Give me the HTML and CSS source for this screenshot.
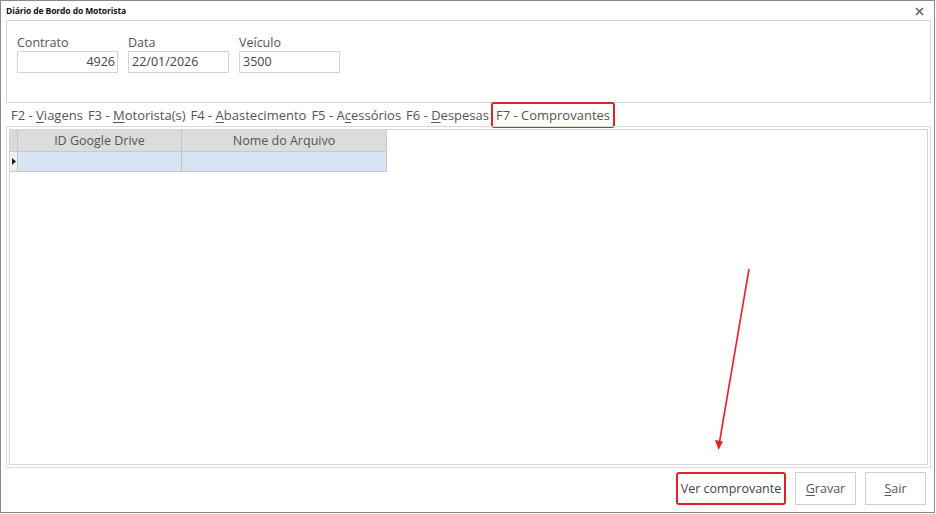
FILE: index.html
```html
<!DOCTYPE html>
<html>
<head>
<meta charset="utf-8">
<link rel="stylesheet" href="styles.css">
</head>
<body>
<div class="window">
  <div class="titlebar">
    <span class="title">Diário de Bordo do Motorista</span>
    <svg class="close" width="9" height="9" viewBox="0 0 9 9"><path d="M1 1L8 8M8 1L1 8" stroke="#666" stroke-width="1.7"/></svg>
  </div>
  <div class="header">
    <div class="field">
      <label>Contrato</label>
      <div class="input right">4926</div>
    </div>
    <div class="field">
      <label>Data</label>
      <div class="input">22/01/2026</div>
    </div>
    <div class="field">
      <label>Veículo</label>
      <div class="input">3500</div>
    </div>
  </div>
  <div class="tabs">
    <span class="tab">F2 - <u>V</u>iagens</span>
    <span class="tab">F3 - <u>M</u>otorista(s)</span>
    <span class="tab">F4 - <u>A</u>bastecimento</span>
    <span class="tab">F5 - A<u>c</u>essórios</span>
    <span class="tab">F6 - <u>D</u>espesas</span>
    <span class="tab active">F7 - Comprovantes</span>
  </div>
  <div class="panel">
    <div class="grid">
      <div class="row head">
        <div class="ind"></div>
        <div class="col c1">ID Google Drive</div>
        <div class="col c2">Nome do Arquivo</div>
      </div>
      <div class="row data">
        <div class="ind"><svg width="4" height="7" viewBox="0 0 4 7"><path d="M0 0L4 3.5L0 7Z" fill="#222"/></svg></div>
        <div class="col c1"></div>
        <div class="col c2"></div>
      </div>
    </div>
  </div>
  <div class="buttons">
    <div class="btn highlight">Ver comprovante</div>
    <div class="btn"><u>G</u>ravar</div>
    <div class="btn"><u>S</u>air</div>
  </div>
  <svg class="arrow" width="60" height="200" viewBox="0 0 60 200">
    <line x1="53" y1="15" x2="23.5" y2="188" stroke="#e8202e" stroke-width="1.6"/>
    <path d="M19 186L27 187.5L22.5 196Z" fill="#e8202e"/>
  </svg>
</div>
</body>
</html>
```
FILE: styles.css
```css
* { box-sizing: border-box; }
html, body { margin: 0; padding: 0; background: #fff; }
body {
  width: 936px; height: 514px;
  font-family: "Open Sans", "Noto Sans", sans-serif;
  color: #444;
}
.window {
  position: relative;
  width: 935px; height: 513px;
  border: 1px solid #8a8a8a;
  background: #fff;
  display: flex; flex-direction: column;
}
.titlebar {
  height: 19px;
  display: flex; align-items: center; justify-content: space-between;
  padding: 0 10px 0 5px;
}
.title { font-size: 8.5px; font-weight: 700; color: #111; letter-spacing: -0.1px; }
.close { margin-top: 1px; }
.header {
  margin: 0 3px 0 5px;
  height: 83px;
  border: 1px solid #d6d6d6;
  display: flex;
  gap: 10px;
  padding: 13px 0 0 10px;
}
.field { display: flex; flex-direction: column; width: 101px; }
.field label { font-size: 12.5px; line-height: 17px; color: #555; }
.input {
  height: 22px;
  border: 1px solid #d4d4d4;
  font-size: 12.5px; line-height: 20px;
  padding: 0 3px;
  color: #444;
}
.input.right { text-align: right; padding-right: 2px; }
.tabs {
  height: 24px;
  display: flex; align-items: center;
  padding-left: 10px;
  font-size: 13px;
  color: #555;
}
.tab { margin-right: 5px; white-space: nowrap; line-height: 18px; }
.tab u { text-underline-offset: 2px; }
.tab.active {
  border: 2px solid #e0202c;
  border-radius: 3px;
  padding: 1px 3px 2px 3px;
  margin-left: -3px;
  height: 26px;
  line-height: 20px;
  background: #fff;
}
.panel {
  margin: 0 3px 0 5px;
  height: 342px;
  border: 1px solid #dadada;
  padding: 2px;
  margin-top: -1px;
}
.grid {
  height: 100%;
  border: 1px solid #d4d4d4;
  background: #fff;
}
.row { display: flex; width: max-content; }
.row.head { height: 21px; background: #dcdcdc; }
.row.data { height: 21px; background: #d5e5f3; border-top: 1px solid #c8c8c8; border-bottom: 1px solid #c8c8c8; }
.ind { width: 8px; border-right: 1px solid #c4c4c4; display: flex; align-items: center; justify-content: center; }
.row.head .ind { background: #dadada; }
.row.data .ind { background: #f0f0f0; }
.col { border-right: 1px solid #c4c4c4; font-size: 12.5px; line-height: 22px; text-align: center; color: #555; }
.c1 { width: 164px; }
.c2 { width: 205px; border-right: 1px solid #c8c8c8; }
.buttons {
  display: flex; justify-content: flex-end;
  gap: 9px;
  padding: 4px 8px 0 0;
}
.btn {
  height: 33px;
  border: 1px solid #d0d0d0;
  font-size: 12.5px; line-height: 31px;
  color: #555;
  text-align: center;
  width: 61px;
}
.btn u { text-underline-offset: 2px; }
.btn.highlight {
  width: 110px;
  border: 2px solid #e0202c;
  border-radius: 3px;
  color: #444;
  line-height: 29px;
}
.arrow { position: absolute; left: 695px; top: 253px; }
```
